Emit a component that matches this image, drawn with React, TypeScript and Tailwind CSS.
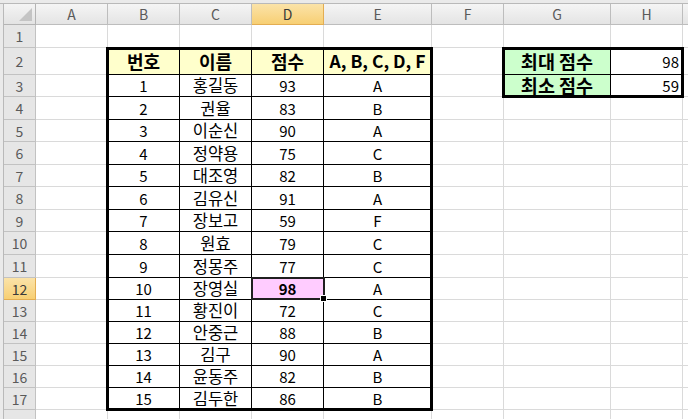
import React from "react";

const COLS = ["A", "B", "C", "D", "E", "F", "G", "H", ""];
// sheet rows 1..18
const ROW_HEIGHTS = [23, 27, 22, 23, 22, 23, 22, 23, 22, 23, 23, 22, 22, 22, 22, 22, 22, 30];

const students: [number, string, number, string][] = [
  [1, "홍길동", 93, "A"],
  [2, "권율", 83, "B"],
  [3, "이순신", 90, "A"],
  [4, "정약용", 75, "C"],
  [5, "대조영", 82, "B"],
  [6, "김유신", 91, "A"],
  [7, "장보고", 59, "F"],
  [8, "원효", 79, "C"],
  [9, "정몽주", 77, "C"],
  [10, "장영실", 98, "A"],
  [11, "황진이", 72, "C"],
  [12, "안중근", 88, "B"],
  [13, "김구", 90, "A"],
  [14, "윤동주", 82, "B"],
  [15, "김두한", 86, "B"],
];

type Cell = { text?: string; bg?: string; size?: string; bold?: boolean; right?: boolean; inTable?: boolean };

function getCell(row: number, col: number): Cell {
  // col: 0 = A
  if (row === 2 && col >= 1 && col <= 4) {
    const heads = ["번호", "이름", "점수", "A, B, C, D, F"];
    return {
      text: heads[col - 1],
      bg: "bg-[#ffffcc]",
      bold: true,
      size: col === 4 ? "text-[17.5px]" : "text-[18px]",
      inTable: true,
    };
  }
  if (row >= 3 && row <= 17 && col >= 1 && col <= 4) {
    const s = students[row - 3];
    const text = String(s[col - 1]);
    if (row === 12 && col === 3) return { text, bg: "bg-[#ffccff]", bold: true, inTable: true };
    return { text, size: col === 2 ? "text-[16.5px]" : undefined, inTable: true };
  }
  if ((row === 2 || row === 3) && col === 6) {
    return { text: row === 2 ? "최대 점수" : "최소 점수", bg: "bg-[#ccffcc]", bold: true, size: "text-[18.5px]", inTable: true };
  }
  if ((row === 2 || row === 3) && col === 7) {
    return { text: row === 2 ? "98" : "59", right: true, inTable: true };
  }
  return {};
}

export default function App() {
  return (
    <div
      className="w-[688px] h-[419px] overflow-hidden bg-white flex flex-col"
      style={{ fontFamily: '"Noto Sans CJK KR", "Noto Sans", sans-serif' }}
    >
      <div className="h-[4px] shrink-0 bg-[#eaeaea] border-b border-[#b9b9b9]" />
      <div className="flex flex-1 min-h-0">
        <div className="w-[4px] shrink-0 bg-[#eaeaea] border-r border-[#b9b9b9]" />
        <div
          className="grid grid-cols-[32px_72px_72px_72px_72px_108px_72px_107px_72px_80px]"
          style={{ gridTemplateRows: ["21px", ...ROW_HEIGHTS.map((h) => `${h}px`)].join(" ") }}
        >
          {/* corner */}
          <div className="relative col-start-1 row-start-1 bg-gradient-to-b from-[#f4f4f4] to-[#e3e3e3] border-r border-b border-[#b4b4b4]">
            <svg className="absolute right-[3px] bottom-[3px]" width="13" height="13" viewBox="0 0 13 13">
              <polygon points="13,0 13,13 0,13" fill="#c4c4c4" />
            </svg>
          </div>

          {/* column headers */}
          {COLS.map((c, i) => (
            <div
              key={"ch" + i}
              className={
                "row-start-1 flex items-center justify-center text-[14px] leading-none border-r border-b " +
                (c === "D"
                  ? "bg-gradient-to-b from-[#fbe3a8] to-[#f7cf73] border-[#e3ad52] text-[#3a3a3a]"
                  : "bg-gradient-to-b from-[#f5f5f5] to-[#e4e4e4] border-[#bdbdbd] text-[#5a5a5a]")
              }
              style={{ gridColumn: i + 2 }}
            >
              {c}
            </div>
          ))}

          {/* row headers */}
          {ROW_HEIGHTS.map((_, r) => (
            <div
              key={"rh" + r}
              className={
                "col-start-1 flex items-center justify-center text-[14px] leading-none border-r border-b " +
                (r + 1 === 12
                  ? "bg-gradient-to-b from-[#fbe3a8] to-[#f7cf73] border-[#e3ad52] text-[#3a3a3a]"
                  : "bg-[#e6e6e6] border-[#c2c2c2] text-[#5a5a5a]")
              }
              style={{ gridRow: r + 2 }}
            >
              {r + 1}
            </div>
          ))}

          {/* cells */}
          {ROW_HEIGHTS.map((_, r) =>
            COLS.map((c, ci) => {
              const cell = getCell(r + 1, ci);
              return (
                <div
                  key={"c" + ci + "-" + r}
                  className={
                    "flex items-center leading-none text-black whitespace-nowrap border-r border-b " +
                    (cell.size ?? "text-[15px]") +
                    " " +
                    (cell.inTable ? "border-black " : "border-[#dadada] ") +
                    (cell.right ? "justify-end pr-[3px] " : "justify-center ") +
                    (cell.bold ? "font-bold " : "") +
                    (cell.bg ?? "")
                  }
                  style={{ gridColumn: ci + 2, gridRow: r + 2 }}
                >
                  {cell.text}
                </div>
              );
            })
          )}

          {/* thick outer borders of the two tables */}
          <div className="col-start-3 col-end-7 row-start-3 row-end-19 z-10 pointer-events-none border-[3px] border-black -ml-[2px] -mt-[1px] -mr-[1px] -mb-[1px]" />
          <div className="col-start-8 col-end-10 row-start-3 row-end-5 z-10 pointer-events-none border-[3px] border-black -ml-[2px] -mt-[1px] -mr-[1px] -mb-[1px]" />

          {/* selected cell D12 */}
          <div className="col-start-5 col-end-6 row-start-13 row-end-14 relative z-20 pointer-events-none border-2 border-[#1f1f1f] -ml-[1px] -mt-[1px] -mr-[1px]">
            <div className="absolute -right-[4px] -bottom-[4px] w-[7px] h-[7px] bg-black border border-white" />
          </div>
        </div>
      </div>
    </div>
  );
}
